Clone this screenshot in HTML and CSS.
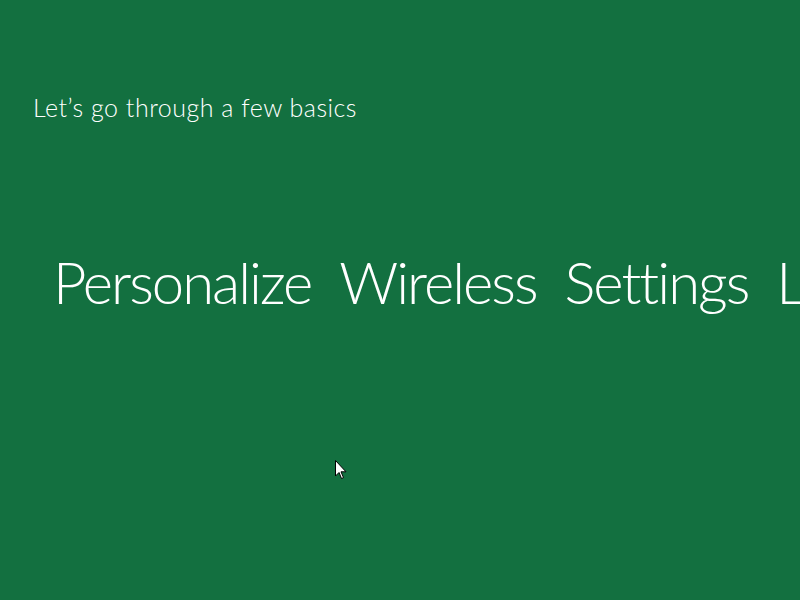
FILE: index.html
```html
<!DOCTYPE html>
<html lang="en">
<head>
    <meta charset="UTF-8">
    <title>Let's go through a few basics</title>
    <link rel="stylesheet" href="styles.css">
</head>
<body>
    <div class="screen">
        <h2 class="intro">Let’s go through a few basics</h2>

        <div class="steps">
            <span class="step">Personalize</span>
            <span class="step">Wireless</span>
            <span class="step">Settings</span>
            <span class="step">Log on</span>
        </div>

        <!-- mouse pointer -->
        <svg class="cursor" width="13" height="20" viewBox="0 0 13 20">
            <path d="M0.5 0.5 L0.5 16 L4 12.5 L6.5 18.5 L8.5 17.6 L6 11.8 L11 11.8 Z" fill="#fff" stroke="#000" stroke-width="1"/>
        </svg>
    </div>
</body>
</html>
```

FILE: styles.css
```css
* {
    margin: 0;
    padding: 0;
    box-sizing: border-box;
}

html, body {
    width: 100%;
    height: 100%;
    overflow: hidden;
}

body {
    font-family: Lato, "Open Sans", sans-serif;
    font-variant-ligatures: none;
    background-color: #137040;
    color: #fff;
}

.screen {
    position: relative;
    width: 800px;
    height: 600px;
    padding: 91px 0 0 33px;
}

.intro {
    font-size: 25px;
    font-weight: 300;
    line-height: 32px;
    letter-spacing: 0.5px;
}

.steps {
    display: flex;
    gap: 28px;
    margin: 124px 0 0 20px;
    white-space: nowrap;
    font-size: 58px;
    font-weight: 300;
    line-height: 70px;
    letter-spacing: -2px;
}

.cursor {
    position: absolute;
    left: 335px;
    top: 460px;
}
```
